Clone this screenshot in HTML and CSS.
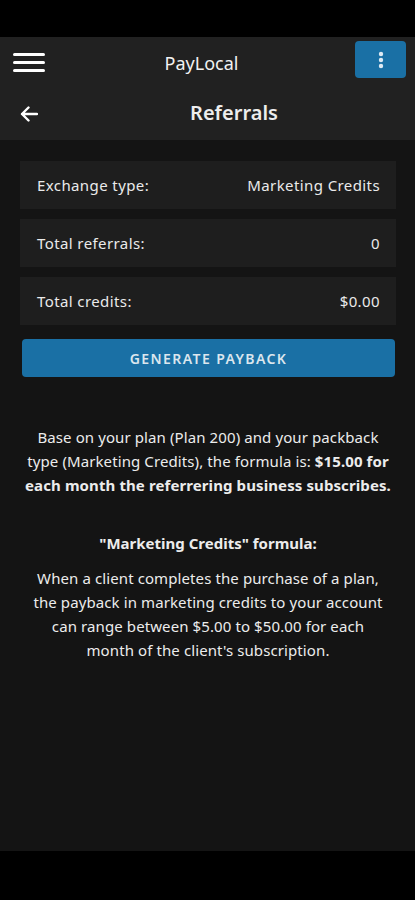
FILE: index.html
```html
<!DOCTYPE html>
<html lang="en">
<head>
    <meta charset="UTF-8">
    <meta name="viewport" content="width=device-width, initial-scale=1.0">
    <title>PayLocal - Referrals</title>
    <link rel="stylesheet" href="styles.css">
</head>
<body>
    <div class="status-bar"></div>

    <header class="header">
        <div class="app-bar">
            <button class="menu-toggle" aria-label="Menu">
                <svg width="32" height="22" viewBox="0 0 32 22">
                    <rect x="0" y="1" width="32" height="3" rx="1.5" fill="#fff"/>
                    <rect x="0" y="9" width="32" height="3" rx="1.5" fill="#fff"/>
                    <rect x="0" y="17" width="32" height="3" rx="1.5" fill="#fff"/>
                </svg>
            </button>
            <div class="app-title">PayLocal</div>
            <button class="more-btn" aria-label="More">
                <svg width="6" height="18" viewBox="0 0 6 18">
                    <circle cx="3" cy="3" r="2.2" fill="#dfeaf3"/>
                    <circle cx="3" cy="9" r="2.2" fill="#dfeaf3"/>
                    <circle cx="3" cy="15" r="2.2" fill="#dfeaf3"/>
                </svg>
            </button>
        </div>
        <div class="page-bar">
            <button class="back-btn" aria-label="Back">
                <svg width="18" height="16" viewBox="0 0 18 16">
                    <path d="M17 8H2M8.5 1.5L2 8l6.5 6.5" stroke="#fff" stroke-width="2.4" fill="none" stroke-linecap="round" stroke-linejoin="round"/>
                </svg>
            </button>
            <h1 class="page-title">Referrals</h1>
        </div>
    </header>

    <main class="main-content">
        <div class="info-row">
            <span>Exchange type:</span>
            <span>Marketing Credits</span>
        </div>
        <div class="info-row">
            <span>Total referrals:</span>
            <span>0</span>
        </div>
        <div class="info-row">
            <span>Total credits:</span>
            <span>$0.00</span>
        </div>

        <button class="payback-btn">GENERATE PAYBACK</button>

        <p class="formula-text">
            Base on your plan (Plan 200) and your packback type (Marketing Credits), the formula is: <strong>$15.00 for each month the referrering business subscribes.</strong>
        </p>

        <h2 class="formula-title">"Marketing Credits" formula:</h2>
        <p class="formula-desc">
            When a client completes the purchase of a plan, the payback in marketing credits to your account can range between $5.00 to $50.00 for each<br>month of the client's subscription.
        </p>
    </main>

    <div class="nav-bar"></div>
</body>
</html>
```

FILE: styles.css
```css
* {
    margin: 0;
    padding: 0;
    box-sizing: border-box;
}

body {
    font-family: "Noto Sans", Lato, sans-serif;
    background: #000;
    color: #ececec;
    width: 415px;
    height: 900px;
    display: flex;
    flex-direction: column;
}

.status-bar {
    height: 37px;
    background: #000;
}

.header {
    background: #212121;
}

.app-bar {
    height: 51px;
    display: flex;
    align-items: center;
    justify-content: space-between;
    padding: 0 9px 0 13px;
    position: relative;
}

.menu-toggle,
.back-btn {
    background: none;
    border: none;
    display: flex;
    cursor: pointer;
}

.app-title {
    position: absolute;
    left: 0;
    right: 0;
    text-align: center;
    font-size: 18px;
    color: #f2f2f2;
    pointer-events: none;
    padding-right: 12px;
}

.more-btn {
    width: 51px;
    height: 37px;
    background: #1a70a5;
    border: none;
    border-radius: 4px;
    display: flex;
    align-items: center;
    justify-content: center;
    cursor: pointer;
    margin-top: -6px;
}

.page-bar {
    height: 52px;
    display: flex;
    align-items: center;
    padding: 0 20px;
    position: relative;
}

.page-title {
    position: absolute;
    left: 0;
    right: 0;
    text-align: center;
    font-size: 20px;
    font-weight: 600;
    color: #ededed;
    pointer-events: none;
    margin-top: -3px;
    padding-left: 53px;
}

.main-content {
    flex: 1;
    background: #141414;
    padding: 21px 19px 0 20px;
    display: flex;
    flex-direction: column;
}

.info-row {
    height: 48px;
    background: #1e1e1e;
    display: flex;
    align-items: center;
    justify-content: space-between;
    padding: 0 16px 0 17px;
    font-size: 15px;
    letter-spacing: 0.4px;
    margin-bottom: 10px;
    color: #eaeaea;
}

.payback-btn {
    margin: 4px 1px 0 2px;
    height: 38px;
    background: #1a70a5;
    color: #dbe6ee;
    border: none;
    border-radius: 4px;
    font-family: inherit;
    font-size: 14px;
    font-weight: 600;
    letter-spacing: 1.4px;
    cursor: pointer;
}

.formula-text {
    margin-top: 48px;
    text-align: center;
    font-size: 15px;
    line-height: 24px;
    letter-spacing: 0.1px;
}

.formula-text strong {
    font-weight: 700;
}

.formula-title {
    margin-top: 34px;
    text-align: center;
    font-size: 15px;
    font-weight: 700;
    line-height: 24px;
}

.formula-desc {
    margin-top: 11px;
    text-align: center;
    font-size: 15px;
    line-height: 24px;
    padding: 0 6px;
    letter-spacing: 0.1px;
}

.nav-bar {
    height: 49px;
    background: #000;
}
```
